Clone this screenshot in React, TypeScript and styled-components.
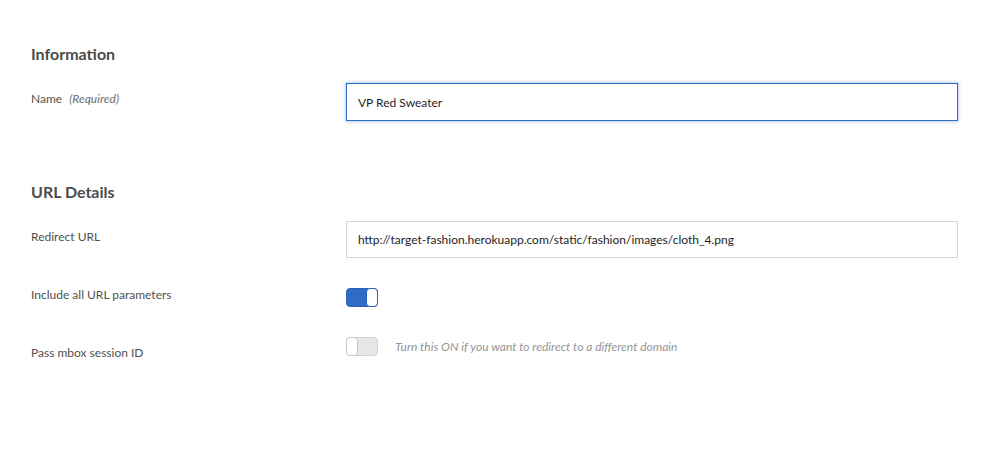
import React from 'react';
import styled, { createGlobalStyle } from 'styled-components';

const GlobalStyle = createGlobalStyle`
  html, body {
    margin: 0;
    padding: 0;
    background: #ffffff;
  }
  body {
    font-family: Lato, "Open Sans", sans-serif;
    color: #4b4b4b;
  }
`;

const App = () => {
  return (
    <>
      <GlobalStyle />
      <Page>
        <Section>
          <Heading>Information</Heading>
          <Row>
            <Label offset={7}>
              Name <Hint>(Required)</Hint>
            </Label>
            <Field>
              <TextInput focused defaultValue='VP Red Sweater' />
            </Field>
          </Row>
        </Section>

        <Section gap={61}>
          <Heading>URL Details</Heading>
          <Row>
            <Label offset={7}>Redirect URL</Label>
            <Field>
              <TextInput defaultValue='http://target-fashion.herokuapp.com/static/fashion/images/cloth_4.png' />
            </Field>
          </Row>
          <Row gap={28}>
            <Label offset={0}>Include all URL parameters</Label>
            <Field offset={2}>
              <Toggle on />
            </Field>
          </Row>
          <Row gap={30}>
            <Label offset={7}>Pass mbox session ID</Label>
            <Field>
              <Toggle on={false} />
              <Helper>Turn this ON if you want to redirect to a different domain</Helper>
            </Field>
          </Row>
        </Section>
      </Page>
    </>
  );
};

const Toggle = ({ on }: { on: boolean }) => (
  <Track on={on}>
    <Knob on={on} />
  </Track>
);

// Styled
const Page = styled.div`
  padding: 44px 37px 0 31px;
`;

const Section = styled.section<{ gap?: number }>`
  display: flex;
  flex-direction: column;
  margin-top: ${({ gap }) => gap ?? 0}px;
`;

const Heading = styled.h2`
  margin: 0 0 19px;
  font-size: 16px;
  line-height: 20px;
  font-weight: 700;
  color: #4b4b4b;
`;

const Row = styled.div<{ gap?: number }>`
  display: flex;
  align-items: flex-start;
  margin-top: ${({ gap }) => gap ?? 0}px;
`;

const Label = styled.div<{ offset: number }>`
  width: 315px;
  flex: none;
  padding-top: ${({ offset }) => offset}px;
  font-size: 12px;
  line-height: 18px;
  color: #505050;
`;

const Hint = styled.span`
  margin-left: 4px;
  font-style: italic;
  color: #6e6e6e;
`;

const Field = styled.div<{ offset?: number }>`
  flex: 1;
  display: flex;
  align-items: center;
  gap: 17px;
  margin-top: ${({ offset }) => offset ?? 0}px;
`;

const TextInput = styled.input<{ focused?: boolean }>`
  box-sizing: border-box;
  width: 612px;
  height: ${({ focused }) => (focused ? 38 : 37)}px;
  padding: 0 11px;
  font-family: Lato, "Open Sans", sans-serif;
  font-size: 12px;
  color: #1e1e1e;
  background: #fff;
  outline: none;
  border: 1px solid ${({ focused }) => (focused ? '#2f6dc4' : '#d3d3d3')};
  border-radius: 0;
  box-shadow: ${({ focused }) => (focused ? '0 0 3px 1px rgba(60, 120, 210, 0.35)' : 'none')};
`;

const Track = styled.div<{ on: boolean }>`
  box-sizing: border-box;
  position: relative;
  width: 32px;
  height: 19px;
  border-radius: 4px;
  flex: none;
  background: ${({ on }) => (on ? '#2f6cc6' : '#e6e6e6')};
  border: 1px solid ${({ on }) => (on ? '#2a62b8' : '#d2d2d2')};
`;

const Knob = styled.div<{ on: boolean }>`
  box-sizing: border-box;
  position: absolute;
  top: -1px;
  ${({ on }) => (on ? 'right: -1px;' : 'left: -1px;')}
  width: 12px;
  height: 19px;
  border-radius: 4px;
  background: #fff;
  border: 1px solid ${({ on }) => (on ? '#2a62b8' : '#cacaca')};
`;

const Helper = styled.span`
  font-size: 12px;
  font-style: italic;
  color: #959595;
`;

export default App;
